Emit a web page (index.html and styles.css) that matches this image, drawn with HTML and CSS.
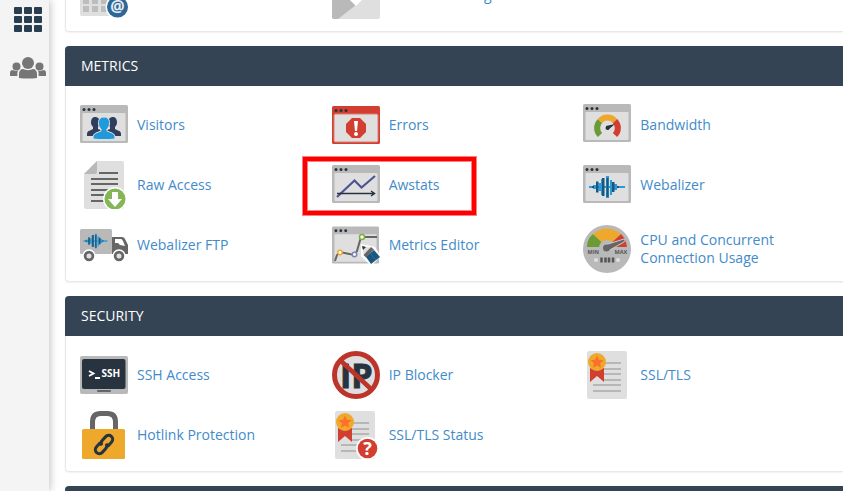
FILE: index.html
```html
<!DOCTYPE html>
<html lang="en">
<head>
  <meta charset="UTF-8" />
  <meta name="viewport" content="width=device-width, initial-scale=1.0"/>
  <title>cPanel</title>
  <link rel="stylesheet" href="styles.css">
</head>
<body>
  <!-- Shared icon parts -->
  <svg class="defs" aria-hidden="true">
    <symbol id="window" viewBox="0 0 48 38">
      <rect width="48" height="38" rx="1.5" fill="#b9b9b9"/>
      <rect x="2.5" y="8" width="43" height="28" rx="1" fill="#dfdfdf"/>
      <g fill="#27343f"><circle cx="4" cy="4.5" r="1.5"/><circle cx="9" cy="4.5" r="1.5"/><circle cx="14" cy="4.5" r="1.5"/></g>
    </symbol>
    <symbol id="wave" viewBox="0 0 36 24">
      <g fill="#2a9bd6">
        <rect x="0" y="11" width="36" height="2"/>
        <rect x="4" y="10" width="3" height="4"/><rect x="9.5" y="8" width="3" height="8"/>
        <rect x="12" y="4" width="2" height="16"/><rect x="17" y="1" width="3" height="22"/>
        <rect x="21" y="5" width="2" height="15"/><rect x="25" y="9" width="3" height="6"/>
      </g>
      <g fill="#1a567d">
        <rect x="3" y="11" width="2" height="2"/><rect x="7" y="6.5" width="2.5" height="11"/>
        <rect x="13" y="3" width="2.5" height="18"/><rect x="17.5" y="3" width="2" height="19"/>
        <rect x="23" y="7" width="2.5" height="10"/><rect x="28" y="11" width="2" height="2"/>
      </g>
    </symbol>
    <symbol id="certificate" viewBox="0 0 48 48">
      <rect x="4" width="40" height="48" rx="2" fill="#dfdfdf"/>
      <path d="M20 12h18M20 18h18M20 23h18M20 29h18M10 34h28M10 40h28" stroke="#b7b7b7" stroke-width="2"/>
      <path d="M7 17h14v14l-7-6-7 6z" fill="#d23f31"/>
      <circle cx="14" cy="11" r="9" fill="#eea92d"/>
      <path d="M14 4.5l1.900 4.200 4.600.5-3.400 3.100.9 4.500-4-2.300-4 2.300.9-4.500-3.400-3.100 4.600-.5z" fill="#fd6f2b"/>
    </symbol>
  </svg>

  <div class="layout">
    <nav class="sidebar">
      <a href="#home" aria-label="Home">
        <svg width="28" height="25" viewBox="0 0 28 25" fill="#293e50">
          <rect width="8" height="7" rx="1"/><rect x="10" width="8" height="7" rx="1"/><rect x="20" width="8" height="7" rx="1"/>
          <rect y="9" width="8" height="7" rx="1"/><rect x="10" y="9" width="8" height="7" rx="1"/><rect x="20" y="9" width="8" height="7" rx="1"/>
          <rect y="18" width="8" height="7" rx="1"/><rect x="10" y="18" width="8" height="7" rx="1"/><rect x="20" y="18" width="8" height="7" rx="1"/>
        </svg>
      </a>
      <a href="#users" aria-label="Users">
        <svg width="36" height="22" viewBox="0 0 36 22" fill="#767676">
          <circle cx="18" cy="6" r="6"/><circle cx="6.5" cy="9.5" r="4"/><circle cx="29.5" cy="9.5" r="4"/>
          <path d="M9 21v-4c0-3 1.500-5 4-5 3 1.500 7 1.500 10 0 2.500 0 4 2 4 5v4q-9 1-18 0z"/>
          <path d="M0 19v-3c0-2 1-3 3-3 1.500 1 3.500 1.200 5 .5-.6 1.500-.8 3.500-.6 5.500zM36 19v-3c0-2-1-3-3-3-1.500 1-3.500 1.200-5 .5.6 1.500.8 3.500.6 5.500z"/>
        </svg>
      </a>
    </nav>

    <main class="content">
      <!-- Email -->
      <section class="panel">
        <div class="items">
          <a class="item" href="#calendars">
            <svg class="icon" viewBox="0 0 48 48">
              <rect y="5" width="40" height="40" rx="2" fill="#dfdfdf"/>
              <path d="M3 27h6v6H3zM12 27h6v6h-6zM21 27h6v6h-6zM3 35h6v6H3zM12 35h6v6h-6zM21 35h6v6h-6z" fill="#bdbdbd"/>
              <circle cx="37.5" cy="36" r="12" fill="#fff"/>
              <circle cx="37.5" cy="36" r="10.5" fill="#2d6897"/>
              <text x="37.5" y="41" class="icon-text" font-size="16" text-anchor="middle" fill="#e8eef3">@</text>
            </svg>
            <span>Calendars</span>
          </a>
          <a class="item" href="#disk">
            <svg class="icon" viewBox="0 0 48 48">
              <path d="M0 14h48v32q0 2-2 2H2q-2 0-2-2z" fill="#dfdfdf"/>
              <path d="M0 14l24 20L6 48H2q-2 0-2-2z" fill="#b9b9b9"/>
              <path d="M5 16h38L24 35z" fill="#fff"/>
            </svg>
            <span>Email Disk Usage</span>
          </a>
        </div>
      </section>

      <!-- Metrics -->
      <section class="panel">
        <h2>METRICS</h2>
        <div class="items">
          <a class="item" href="#visitors">
            <svg class="icon" viewBox="0 0 48 48">
              <use href="#window" y="4" width="48" height="38"/>
              <path fill="#2f3e5c" d="M15 16c3 0 5 2 4.500 6-.3 2-1 3-1.500 4v2l5 2v5H7v-2c0-2 1-3 3-3.500l3-1.500v-2c-1.500-1.500-2-3-2-5 0-3 1.500-5 4-5z"/>
              <path fill="#2f3e5c" d="M33 16c-3 0-5 2-4.500 6 .3 2 1 3 1.500 4v2l-5 2v5h16v-2c0-2-1-3-3-3.500L35 28v-2c1.500-1.500 2-3 2-5 0-3-1.500-5-4-5z"/>
              <path fill="#1f9bdc" stroke="#dfdfdf" stroke-width="1" d="M24 16c4 0 6 3 5.500 7-.3 2-1 3.500-2.500 5v2l5 2c2.500 1 3 2.500 3 6-7 .8-15 .8-22 0 0-3.500.5-5 3-6l5-2v-2c-1.500-1.500-2.200-3-2.500-5-.5-4 1.500-7 5.500-7z"/>
            </svg>
            <span>Visitors</span>
          </a>
          <a class="item" href="#errors">
            <svg class="icon" viewBox="0 0 48 48">
              <rect y="5" width="48" height="38" rx="1.5" fill="#d23f31"/>
              <rect x="2" y="13" width="44" height="28" rx="1.5" fill="#dfdfdf" stroke="#df7b70" stroke-width="1"/>
              <g fill="#27343f"><circle cx="4" cy="9.5" r="1.5"/><circle cx="9" cy="9.5" r="1.5"/><circle cx="14" cy="9.5" r="1.5"/></g>
              <path d="M20 17h8l6 6v8l-6 6h-8l-6-6v-8z" fill="#d23f31"/>
              <path d="M22 20h4l-1 10h-2z" fill="#fff"/><circle cx="24" cy="33" r="2" fill="#fff"/>
            </svg>
            <span>Errors</span>
          </a>
          <a class="item" href="#bandwidth">
            <svg class="icon" viewBox="0 0 48 48">
              <use href="#window" y="3" width="48" height="38"/>
              <g fill="none" stroke-width="6">
                <path d="M17 34A10 10 0 0 1 17 20" stroke="#6a9b35"/>
                <path d="M17 20A10 10 0 0 1 32 20" stroke="#eea92d"/>
                <path d="M32 20A10 10 0 0 1 32 34" stroke="#d23f31"/>
              </g>
              <path d="M23 25l9-2-7 6z" fill="#27343f"/><circle cx="24.5" cy="27" r="2" fill="#27343f"/>
            </svg>
            <span>Bandwidth</span>
          </a>
          <a class="item" href="#raw">
            <svg class="icon" viewBox="0 0 48 48">
              <path d="M17 0h25q2 0 2 2v44q0 2-2 2H6q-2 0-2-2V13z" fill="#dfdfdf"/>
              <path d="M17 0v11q0 2-2 2H4z" fill="#b9b9b9"/>
              <path d="M19 12h19M11 18h27M11 23h27M11 29h27M11 34h15M11 40h14" stroke="#666" stroke-width="2"/>
              <circle cx="35" cy="38" r="12" fill="#fff"/><circle cx="35" cy="38" r="10.5" fill="#86b558"/>
              <path d="M32 31h6v7h4l-7 8-7-8h4z" fill="#fff"/>
            </svg>
            <span>Raw Access</span>
          </a>
          <a class="item highlight" href="#awstats">
            <svg class="icon" viewBox="0 0 48 48">
              <use href="#window" y="4" width="48" height="38"/>
              <path d="M5 36l17.500-16.500 7 7L43 15" fill="none" stroke="#4d5590" stroke-width="2.2"/>
              <path d="M5 32.500h37M39 30l3.500 2.500L39 35" fill="none" stroke="#27343f" stroke-width="1.5"/>
            </svg>
            <span>Awstats</span>
          </a>
          <a class="item" href="#webalizer">
            <svg class="icon" viewBox="0 0 48 48">
              <use href="#window" y="4" width="48" height="38"/>
              <use href="#wave" x="6" y="14" width="36" height="24"/>
            </svg>
            <span>Webalizer</span>
          </a>
          <a class="item" href="#webalizer-ftp">
            <svg class="icon" viewBox="0 0 48 48">
              <rect y="8" width="32" height="25" rx="1.5" fill="#b9b9b9"/>
              <use href="#wave" x="3" y="12" width="25" height="16"/>
              <path d="M32 16h10q2 0 3 2l3 6v9H32z" fill="#666"/>
              <path d="M35 18h6q1 0 2 2l2 5-5-1-2-2h-3z" fill="#fff"/>
              <g fill="#666" stroke="#fff" stroke-width="1.5"><circle cx="9" cy="35" r="6"/><circle cx="39" cy="35" r="6"/></g>
              <circle cx="9" cy="35" r="2.5" fill="#dfdfdf"/><circle cx="39" cy="35" r="2.5" fill="#dfdfdf"/>
            </svg>
            <span>Webalizer FTP</span>
          </a>
          <a class="item" href="#metrics-editor">
            <svg class="icon" viewBox="0 0 48 48">
              <use href="#window" y="5" width="47" height="38"/>
              <path d="M3 40l2-6 3-3 14 3 3-4 4-14h16" fill="none" stroke="#666" stroke-width="2"/>
              <g fill="#fff" stroke-width="1.5"><circle cx="8" cy="31.5" r="2.200" stroke="#eea92d"/><circle cx="22.5" cy="33.5" r="2.200" stroke="#7c83b9"/><circle cx="30" cy="16" r="2.500" stroke="#7bb13c"/></g>
              <path d="M29 23l14 3 6 9-10 10-10-10z" fill="#fff"/>
              <path d="M30 25l10 2-8 8z" fill="#dfdfdf"/><path d="M30 25l4 1-3 3z" fill="#27343f"/>
              <path d="M39 26l3 2.500-8 8-2.500-2.500z" fill="#666"/>
              <path d="M42 29l6 7-9 7-5-7z" fill="#1a567d"/><path d="M38 32l6 7" stroke="#2d6f9d" stroke-width="1"/>
            </svg>
            <span>Metrics Editor</span>
          </a>
          <a class="item item-long" href="#cpu">
            <svg class="icon" viewBox="0 0 48 48">
              <circle cx="24" cy="24" r="24" fill="#b9b9b9"/>
              <path d="M24 22H4q0-8 6-13z" fill="#6a9b35"/>
              <path d="M24 22L10 9q14-11 28 0z" fill="#eea92d"/>
              <path d="M24 22L38 9q5 5 6 13z" fill="#d23f31"/>
              <circle cx="24" cy="23" r="8" fill="#b9b9b9"/>
              <path d="M22 20l19-6q2 1 0 3l-16 9z" fill="#666" stroke="#ccc" stroke-width="1"/><circle cx="23.5" cy="23" r="3.5" fill="#666"/>
              <text x="4.5" y="29" class="icon-text" font-size="5.5" fill="#555">MIN</text>
              <text x="31.5" y="29" class="icon-text" font-size="5.5" fill="#555">MAX</text>
              <path d="M18.500 32.500v5M22.500 32.500v5M26 32.500v5M30 32.500v5" stroke="#555" stroke-width="2.5"/>
              <circle cx="13" cy="35" r="2" fill="#dfdfdf"/><circle cx="35" cy="35" r="2" fill="#dfdfdf"/>
            </svg>
            <span>CPU and Concurrent Connection Usage</span>
          </a>
        </div>
      </section>

      <!-- Security -->
      <section class="panel">
        <h2>SECURITY</h2>
        <div class="items">
          <a class="item" href="#ssh">
            <svg class="icon" viewBox="0 0 48 48">
              <rect y="5" width="48" height="38" rx="2" fill="#b9b9b9"/>
              <rect x="2" y="8" width="43.5" height="30" rx="2" fill="#27343f"/>
              <rect x="17" y="39" width="14" height="2" rx="1" fill="#666"/>
              <path d="M9 20l4.500 2.500L9 25M15 27h5" fill="none" stroke="#fff" stroke-width="1.8"/>
              <text x="21.5" y="26" class="icon-text" font-size="10" fill="#fff">SSH</text>
            </svg>
            <span>SSH Access</span>
          </a>
          <a class="item" href="#ip-blocker">
            <svg class="icon" viewBox="0 0 48 48">
              <circle cx="24" cy="24" r="21.5" fill="#dfdfdf"/>
              <text x="8" y="36.5" class="icon-text" font-size="34" fill="#27343f" stroke="#27343f">IP</text>
              <path d="M9 10l30 28" stroke="#bd342a" stroke-width="4.5"/>
              <circle cx="24" cy="24" r="21.5" fill="none" stroke="#bd342a" stroke-width="5"/>
            </svg>
            <span>IP Blocker</span>
          </a>
          <a class="item" href="#ssl">
            <svg class="icon" viewBox="0 0 48 48"><use href="#certificate" width="48" height="48"/></svg>
            <span>SSL/TLS</span>
          </a>
          <a class="item" href="#hotlink">
            <svg class="icon" viewBox="0 0 48 48">
              <path d="M12.500 20v-9q0-8.500 8-8.500h7q8 0 8 8.500v9" fill="none" stroke="#666" stroke-width="5"/>
              <rect x="2" y="18" width="43" height="30" rx="1.5" fill="#eea92d"/>
              <g transform="rotate(-48 24 33.500)" fill="none" stroke="#27343f" stroke-width="3">
                <path d="M23 29.500h-6a4 4 0 0 0 0 8h5a4 4 0 0 0 4-3M25 37.500h6a4 4 0 0 0 0-8h-5a4 4 0 0 0-4 3"/>
              </g>
            </svg>
            <span>Hotlink Protection</span>
          </a>
          <a class="item" href="#ssl-status">
            <svg class="icon" viewBox="0 0 48 48">
              <use href="#certificate" x="-1" width="48" height="48"/>
              <circle cx="35.5" cy="37.5" r="11.5" fill="#fff"/><circle cx="35.5" cy="37.5" r="9.8" fill="#d23f31"/>
              <text x="35.5" y="43.5" class="icon-text" font-size="18" text-anchor="middle" fill="#fff">?</text>
            </svg>
            <span>SSL/TLS Status</span>
          </a>
        </div>
      </section>

      <section class="panel">
        <h2></h2>
      </section>
    </main>
  </div>
</body>
</html>
```

FILE: styles.css
```css
/* General Styles */
*,
*::after {
  box-sizing: border-box;
}

body {
  font-family: 'Open Sans', 'Noto Sans', sans-serif;
  font-size: 14px;
  line-height: 18px;
  background-color: #fff;
  margin: 0;
}

.defs {
  display: none;
}

.layout {
  display: flex;
  height: 100vh;
  overflow: hidden;
}

/* Sidebar */
.sidebar {
  display: flex;
  flex-direction: column;
  align-items: center;
  gap: 25px;
  flex: none;
  width: 49px;
  padding: 7px 0 0 7px;
  background-color: #f4f4f4;
  box-shadow: 1px 0 8px rgba(0, 0, 0, 0.25);
}

.sidebar svg {
  display: block;
}

/* Panels, scrolled past the first rows */
.content {
  flex: 1;
  min-width: 0;
  margin-top: -44px;
  padding-left: 16px;
}

.panel {
  margin-bottom: 14px;
  border: 1px solid #e8e8e8;
  border-width: 0 0 1px 1px;
  border-radius: 4px 0 0 4px;
  box-shadow: 0 1px 2px rgba(0, 0, 0, 0.06);
}

.panel h2 {
  height: 40px;
  margin: 0 0 0 -1px;
  padding: 11px 16px;
  border-radius: 4px 0 0 0;
  background-color: #354454;
  color: #fff;
  font-size: 14px;
  font-weight: 400;
}

.items {
  display: grid;
  grid-template-columns: repeat(3, 1fr);
  padding: 9px 8px 6px 14px;
}

.item {
  position: relative;
  display: flex;
  align-items: center;
  gap: 9px;
  height: 60px;
  color: #428bca;
  text-decoration: none;
}

/* Two-line labels sit a little lower in the row */
.item-long {
  padding-top: 8px;
}

.icon {
  flex: none;
  width: 48px;
  height: 48px;
}

.icon-text {
  font-family: 'Open Sans', sans-serif;
  font-weight: 700;
}

/* Red frame around the marked item */
.highlight::after {
  content: '';
  position: absolute;
  top: 2px;
  left: -29px;
  width: 173px;
  height: 58px;
  border: 4px solid #f00;
  box-shadow: 0 0 0 1px #ff8080, inset 0 0 0 1px #ff8080;
}
```
